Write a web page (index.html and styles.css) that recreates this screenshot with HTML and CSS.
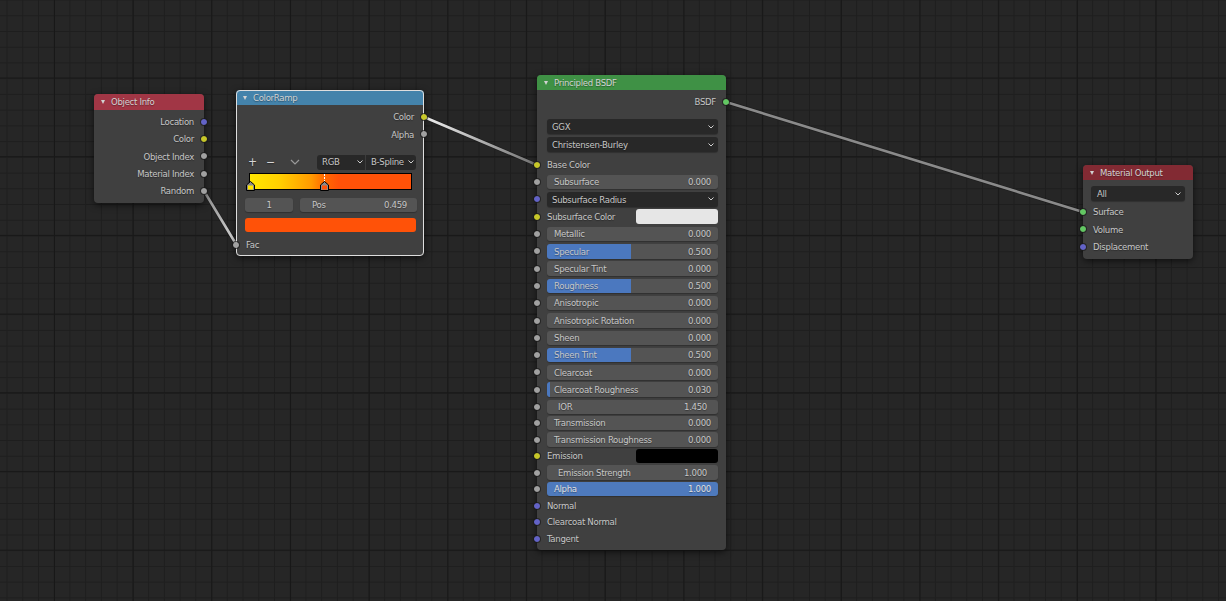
FILE: index.html
```html
<!DOCTYPE html>
<html lang="en">
<head>
<meta charset="utf-8">
<title>Shader Editor</title>
<link rel="stylesheet" href="styles.css">
</head>
<body>
<main class="canvas">
  <svg class="wires" width="1226" height="601" viewBox="0 0 1226 601">
    <defs>
      <linearGradient id="hot" gradientUnits="userSpaceOnUse" x1="424" y1="117" x2="537" y2="165">
        <stop offset="0" stop-color="#f2f2f2"/>
        <stop offset="1" stop-color="#6f6f6f"/>
      </linearGradient>
      <linearGradient id="hot2" gradientUnits="userSpaceOnUse" x1="204" y1="191" x2="236" y2="244">
        <stop offset="0" stop-color="#8a8a8a"/>
        <stop offset="1" stop-color="#d8d8d8"/>
      </linearGradient>
    </defs>
    <path class="wire-back" d="M204 191 L236 244"/>
    <path class="wire wire-in" d="M204 191 L236 244"/>
    <path class="wire-back" d="M424 117 L537 165"/>
    <path class="wire wire-hot" d="M424 117 L537 165"/>
    <path class="wire-back" d="M726 102 L1083 212"/>
    <path class="wire" d="M726 102 L1083 212"/>
  </svg>

  <section class="node node-info">
    <header class="head head-red"><i class="tri"></i>Object Info</header>
    <div class="body body-info">
      <div class="row out">Location<b class="sock blue"></b></div>
      <div class="row out">Color<b class="sock yellow"></b></div>
      <div class="row out">Object Index<b class="sock grey"></b></div>
      <div class="row out">Material Index<b class="sock grey"></b></div>
      <div class="row out">Random<b class="sock grey"></b></div>
    </div>
  </section>

  <section class="node node-ramp">
    <header class="head head-blue"><i class="tri"></i>ColorRamp</header>
    <div class="body body-ramp">
      <div class="row out">Color<b class="sock yellow"></b></div>
      <div class="row out">Alpha<b class="sock grey"></b></div>
      <div class="ramp-tools">
        <span class="tool">+</span>
        <span class="tool">&minus;</span>
        <svg class="tool-chev" width="10" height="6" viewBox="0 0 10 6"><path d="M1 1l4 4 4-4"/></svg>
        <div class="seg">
          <span class="seg-item seg-rgb">RGB<svg class="chev" width="6" height="4" viewBox="0 0 6 4"><path d="M.5.5L3 3 5.500.5"/></svg></span>
          <span class="seg-item seg-spline">B-Spline<svg class="chev" width="6" height="4" viewBox="0 0 6 4"><path d="M.5.5L3 3 5.500.5"/></svg></span>
        </div>
      </div>
      <div class="ramp">
        <svg class="stop stop-a" width="9" height="10" viewBox="0 0 9 10"><path d="M4.500 .5L8.500 4v5.500H.5V4z" fill="#8a8a8a" stroke="#000"/><rect x="2" y="4.500" width="5" height="4" fill="#ffe600"/></svg>
        <svg class="stop stop-b" width="9" height="17" viewBox="0 0 9 17"><path d="M4.500 0v7" stroke="#fff" stroke-dasharray="2 1"/><path d="M4.500 7.500L8.500 11v5.500H.5V11z" fill="#8a8a8a" stroke="#000"/><rect x="2" y="11.500" width="5" height="4" fill="#ff5208"/></svg>
      </div>
      <div class="ramp-fields">
        <span class="num field-index">1</span>
        <span class="num field-pos"><span>Pos</span><span>0.459</span></span>
      </div>
      <div class="swatch swatch-orange"></div>
      <div class="row in row-fac"><b class="sock grey"></b>Fac</div>
    </div>
  </section>

  <section class="node node-bsdf">
    <header class="head head-green"><i class="tri"></i>Principled BSDF</header>
    <div class="body body-bsdf">
      <div class="row out">BSDF<b class="sock green"></b></div>
      <div class="select sel-first">GGX<svg class="chev" width="6" height="4" viewBox="0 0 6 4"><path d="M.5.5L3 3 5.500.5"/></svg></div>
      <div class="select sel-second">Christensen-Burley<svg class="chev" width="6" height="4" viewBox="0 0 6 4"><path d="M.5.5L3 3 5.500.5"/></svg></div>
      <div class="row in row-base"><b class="sock yellow"></b>Base Color</div>
      <div class="row in"><b class="sock grey"></b><span class="num"><span>Subsurface</span><span>0.000</span></span></div>
      <div class="row in"><b class="sock blue"></b><span class="select">Subsurface Radius<svg class="chev" width="6" height="4" viewBox="0 0 6 4"><path d="M.5.5L3 3 5.500.5"/></svg></span></div>
      <div class="row in"><b class="sock yellow"></b><span class="color-label">Subsurface Color</span><span class="swatch swatch-white"></span></div>
      <div class="row in"><b class="sock grey"></b><span class="num"><span>Metallic</span><span>0.000</span></span></div>
      <div class="row in"><b class="sock grey"></b><span class="num half"><span>Specular</span><span>0.500</span></span></div>
      <div class="row in"><b class="sock grey"></b><span class="num"><span>Specular Tint</span><span>0.000</span></span></div>
      <div class="row in"><b class="sock grey"></b><span class="num half"><span>Roughness</span><span>0.500</span></span></div>
      <div class="row in"><b class="sock grey"></b><span class="num"><span>Anisotropic</span><span>0.000</span></span></div>
      <div class="row in"><b class="sock grey"></b><span class="num"><span>Anisotropic Rotation</span><span>0.000</span></span></div>
      <div class="row in"><b class="sock grey"></b><span class="num"><span>Sheen</span><span>0.000</span></span></div>
      <div class="row in"><b class="sock grey"></b><span class="num half"><span>Sheen Tint</span><span>0.500</span></span></div>
      <div class="row in"><b class="sock grey"></b><span class="num"><span>Clearcoat</span><span>0.000</span></span></div>
      <div class="row in"><b class="sock grey"></b><span class="num sliver"><span>Clearcoat Roughness</span><span>0.030</span></span></div>
      <div class="row in row-ior"><b class="sock grey"></b><span class="num plain"><span>IOR</span><span>1.450</span></span></div>
      <div class="row in tight"><b class="sock grey"></b><span class="num"><span>Transmission</span><span>0.000</span></span></div>
      <div class="row in tight"><b class="sock grey"></b><span class="num"><span>Transmission Roughness</span><span>0.000</span></span></div>
      <div class="row in tight"><b class="sock yellow"></b><span class="color-label">Emission</span><span class="swatch swatch-black"></span></div>
      <div class="row in tight"><b class="sock grey"></b><span class="num plain"><span>Emission Strength</span><span>1.000</span></span></div>
      <div class="row in tight"><b class="sock grey"></b><span class="num full"><span>Alpha</span><span>1.000</span></span></div>
      <div class="row in tight"><b class="sock blue"></b>Normal</div>
      <div class="row in tight"><b class="sock blue"></b>Clearcoat Normal</div>
      <div class="row in tight"><b class="sock blue"></b>Tangent</div>
    </div>
  </section>

  <section class="node node-output">
    <header class="head head-darkred"><i class="tri"></i>Material Output</header>
    <div class="body body-output">
      <div class="select sel-all">All<svg class="chev" width="6" height="4" viewBox="0 0 6 4"><path d="M.5.5L3 3 5.500.5"/></svg></div>
      <div class="row in"><b class="sock green"></b>Surface</div>
      <div class="row in"><b class="sock green"></b>Volume</div>
      <div class="row in"><b class="sock blue"></b>Displacement</div>
    </div>
  </section>
</main>
</body>
</html>
```

FILE: styles.css
```css
* { box-sizing: border-box; }
html, body { margin: 0; padding: 0; }
body { width: 1226px; height: 601px; overflow: hidden; background: #232323; }

.canvas {
  position: relative;
  width: 1226px;
  height: 601px;
  overflow: hidden;
  font: 9.500px/1 "DejaVu Sans Condensed", "DejaVu Sans", sans-serif;
  font-stretch: condensed;
  letter-spacing: -.3px;
  color: #c6c6c6;
  text-shadow: 0 1px 1px rgba(0, 0, 0, .35);
  background-color: #262626;
  background-image:
    linear-gradient(to right, #181818 1px, transparent 1px),
    linear-gradient(to bottom, #181818 1px, transparent 1px),
    linear-gradient(to right, #1e1e1e 1px, transparent 1px),
    linear-gradient(to bottom, #1e1e1e 1px, transparent 1px);
  background-size: 78.7px 78.7px, 78.7px 78.7px, 15.74px 15.74px, 15.74px 15.74px;
  background-position: 54px 0, 0 77.500px, 6.500px 0, 0 -0.500px;
}

.wires { position: absolute; left: 0; top: 0; z-index: 1; }
.wires path { fill: none; stroke-linecap: round; }
.wire-back { stroke: #111; stroke-width: 4; opacity: .4; }
.wire { stroke: #8a8a8a; stroke-width: 2.600; }
.wire-hot { stroke: url(#hot); }
.wire-in { stroke: url(#hot2); }

.node {
  position: absolute;
  z-index: 2;
  border-radius: 4px;
  background: #404040;
  box-shadow: 0 2px 7px rgba(0, 0, 0, .6);
}
.node-info { left: 94px; top: 94px; width: 110px; height: 109px; }
.node-ramp { left: 236px; top: 90px; width: 188px; height: 166px; outline: 1.500px solid #dedede; outline-offset: -1px; }
.node-bsdf { left: 537px; top: 75px; width: 189px; height: 475px; }
.node-output { left: 1083px; top: 165px; width: 110px; height: 94px; }

.head {
  display: flex;
  align-items: center;
  height: 16px;
  padding-left: 7px;
  border-radius: 4px 4px 0 0;
  color: #d2d2d2;
  white-space: nowrap;
}
.head-red { background: #a13645; }
.head-blue { height: 15px; background: #4483ab; }
.head-green { height: 15px; background: #3f9145; }
.head-darkred { height: 15px; background: #822a33; }
.tri {
  width: 0;
  height: 0;
  margin-right: 6px;
  border-left: 2.500px solid transparent;
  border-right: 2.500px solid transparent;
  border-top: 4px solid #d2d2d2;
}

.body { display: flex; flex-direction: column; }
.body-info { padding-top: 3.200px; }
.body-ramp { padding-top: 3.500px; }
.body-bsdf { padding-top: 3px; }
.body-output { padding-top: 6px; }

.row {
  position: relative;
  display: flex;
  align-items: center;
  flex: none;
  height: 17.300px;
  white-space: nowrap;
}
.row.tight { height: 16.500px; }
.row-ior { margin-bottom: -.8px; }
.out { justify-content: flex-end; padding-right: 10px; }
.in { padding-left: 10px; padding-right: 8px; }
.row-base { margin-top: 3.900px; }

.sock {
  position: absolute;
  top: 50%;
  width: 8px;
  height: 8px;
  margin-top: -4px;
  border-radius: 50%;
  border: 1px solid rgba(25, 25, 25, .7);
  background-clip: padding-box;
}
.out .sock { right: -4px; }
.in .sock { left: -4px; }
.blue { background-color: #6363c7; }
.yellow { background-color: #c7c729; }
.grey { background-color: #a1a1a1; }
.green { background-color: #63c763; }

.select, .num, .swatch, .seg { border-radius: 3px; flex: none; }
.select {
  position: relative;
  display: flex;
  align-items: center;
  justify-content: space-between;
  height: 15px;
  padding: 0 4px 0 5px;
  background: #282828;
  box-shadow: 0 1px 1px rgba(0, 0, 0, .25);
  width: 171px;
}
.body-bsdf > .select { margin-left: 10px; }
.sel-first { margin-top: 9px; }
.sel-second { margin-top: 3px; }
.chev { fill: none; stroke: #d0d0d0; stroke-width: 1; flex: none; }

.num {
  display: flex;
  align-items: center;
  justify-content: space-between;
  width: 171px;
  height: 14.500px;
  padding: 0 7px;
  background: #545454;
  box-shadow: 0 1px 1px rgba(0, 0, 0, .25);
}
.num.plain { padding: 0 11px 0 11px; }
.half { background: linear-gradient(to right, #4b78bf 84px, #545454 84px); }
.sliver { background: linear-gradient(to right, #4b78bf 3px, #545454 3px); }
.full { background: #4e7abd; color: #e0e0e0; }

.color-label { width: 89px; flex: none; }
.swatch { height: 14.500px; }
.swatch-white { width: 82px; background: #e6e6e6; }
.swatch-black { width: 82px; background: #000; }

.ramp-tools {
  display: flex;
  align-items: center;
  height: 16px;
  margin: 11px 8px 0 0;
  padding-left: 12px;
}
.tool { width: 18px; font-size: 12px; line-height: 16px; color: #d6d6d6; }
.tool-chev { fill: none; stroke: #9a9a9a; stroke-width: 1.200; margin-left: 6px; flex: none; }
.seg { display: flex; margin-left: auto; height: 15px; background: #282828; white-space: nowrap; }
.seg-item { display: flex; align-items: center; justify-content: space-between; padding: 0 2px 0 5px; }
.seg-rgb { width: 49px; border-right: 1px solid #3c3c3c; }
.seg-spline { width: 50px; }

.ramp {
  position: relative;
  height: 17px;
  margin: 3px 12px 0 13px;
  border: 1px solid #000;
  background: linear-gradient(to right, #ffe600 0%, #ffd000 18%, #ff9a00 38%, #ff6a00 46%, #ff5208 55%, #ff5208 100%);
}
.stop { position: absolute; }
.stop-a { left: -4px; top: 7px; }
.stop-b { left: 70px; top: 0; }

.ramp-fields { display: flex; gap: 7px; margin: 8px 8px 0 9px; }
.ramp-fields .num { height: 14px; }
.field-index { width: 48px; justify-content: center; padding-right: 7px; }
.field-pos { width: 117px; padding: 0 10px 0 12px; }
.swatch-orange { width: 171px; height: 14px; margin: 6px 0 0 9px; background: #ff5208; }
.row-fac { margin-top: 4px; }

.sel-all { width: 94px; margin: 0 0 2px 8px; padding-left: 6px; }
.body-output .row { height: 17.500px; }
```
